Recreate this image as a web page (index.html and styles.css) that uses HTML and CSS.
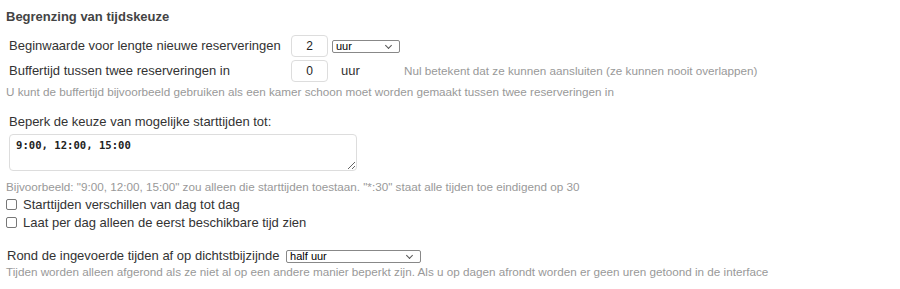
FILE: index.html
```html
<!DOCTYPE html>
<html lang="nl">
<head>
    <meta charset="UTF-8">
    <title>Begrenzing van tijdskeuze</title>
    <link rel="stylesheet" href="styles.css">
</head>
<body>
    <div class="settings">
        <h3>Begrenzing van tijdskeuze</h3>

        <table class="duration-table">
            <tr>
                <td class="label">Beginwaarde voor lengte nieuwe reserveringen</td>
                <td><input type="text" class="small-input" value="2"></td>
                <td class="unit-cell">
                    <span class="select-wrap unit-wrap">
                        <select class="plain-select">
                            <option>uur</option>
                        </select>
                    </span>
                </td>
                <td></td>
            </tr>
            <tr>
                <td class="label">Buffertijd tussen twee reserveringen in</td>
                <td><input type="text" class="small-input" value="0"></td>
                <td class="unit">uur</td>
                <td class="hint">Nul betekent dat ze kunnen aansluiten (ze kunnen nooit overlappen)</td>
            </tr>
        </table>
        <p class="help">U kunt de buffertijd bijvoorbeeld gebruiken als een kamer schoon moet worden gemaakt tussen twee reserveringen in</p>

        <div class="block">
            <label class="block-label" for="starttimes">Beperk de keuze van mogelijke starttijden tot:</label>
            <textarea id="starttimes" class="times">9:00, 12:00, 15:00</textarea>
            <p class="help">Bijvoorbeeld: "9:00, 12:00, 15:00" zou alleen die starttijden toestaan. "*:30" staat alle tijden toe eindigend op 30</p>
            <label class="check"><input type="checkbox"> Starttijden verschillen van dag tot dag</label>
            <label class="check"><input type="checkbox"> Laat per dag alleen de eerst beschikbare tijd zien</label>
        </div>

        <div class="block round">
            <label for="rounding">Rond de ingevoerde tijden af op dichtstbijzijnde</label>
            <span class="select-wrap round-wrap">
                <select id="rounding" class="plain-select">
                    <option>half uur</option>
                </select>
            </span>
            <p class="help">Tijden worden alleen afgerond als ze niet al op een andere manier beperkt zijn. Als u op dagen afrondt worden er geen uren getoond in de interface</p>
        </div>
    </div>
</body>
</html>
```

FILE: styles.css
```css
body {
    margin: 0;
    font-family: "Liberation Sans", Arial, sans-serif;
    font-size: 13px;
    color: #333;
    background-color: #fff;
}
.settings {
    padding: 0 6px;
}
.settings h3 {
    font-size: 13px;
    color: #444;
    margin: 0;
    padding-top: 9px;
    height: 21px;
}
.duration-table {
    border-collapse: collapse;
    margin-top: 3px;
}
.duration-table td {
    padding: 0;
    height: 25px;
    vertical-align: middle;
}
.duration-table .label {
    padding-left: 3px;
    width: 282px;
}
.small-input {
    width: 37px;
    height: 22px;
    box-sizing: border-box;
    border: 1px solid #ddd;
    border-radius: 4px;
    text-align: center;
    font-family: inherit;
    font-size: 12px;
    color: #222;
    padding: 0;
    margin: 0;
}
.unit-cell {
    width: 72px;
}
.unit-wrap {
    margin-left: 4px;
    width: 68px;
}
.unit {
    padding-left: 13px !important;
}
.hint {
    color: #999;
    font-size: 11.7px;
    padding-left: 4px !important;
}

/* select met dunne chevron */
.select-wrap {
    position: relative;
    display: inline-block;
    vertical-align: middle;
    height: 13px;
}
.select-wrap::after {
    content: "";
    position: absolute;
    right: 9px;
    top: 3px;
    width: 4px;
    height: 4px;
    border-right: 1px solid #555;
    border-bottom: 1px solid #555;
    transform: rotate(45deg);
    pointer-events: none;
}
.plain-select {
    -webkit-appearance: none;
    appearance: none;
    display: block;
    width: 100%;
    height: 13px;
    box-sizing: border-box;
    margin: 0;
    padding: 0 0 0 3px;
    font-size: 11px;
    line-height: 11px;
    font-family: inherit;
    border: 1px solid #888;
    border-radius: 2px;
    background: #fff;
    color: #000;
}

.help {
    margin: 0;
    color: #999;
    font-size: 11.7px;
    line-height: 17px;
}
.block {
    margin-top: 13px;
}
.block-label {
    display: block;
    padding-left: 3px;
    line-height: 18px;
}
.times {
    display: block;
    margin: 3px 0 7px 3px;
    width: 348px;
    height: 37px;
    box-sizing: border-box;
    border: 1px solid #ddd;
    border-radius: 4px;
    padding: 4px 6px;
    font-family: "DejaVu Sans Mono", "Liberation Mono", monospace;
    font-size: 10.6px;
    font-weight: bold;
    color: #222;
}
.check {
    display: flex;
    align-items: center;
    height: 18px;
}
.check input {
    -webkit-appearance: none;
    appearance: none;
    margin: 0 6px 0 0;
    width: 11px;
    height: 11px;
    box-sizing: border-box;
    border: 1px solid #777;
    border-radius: 2px;
    background: #fff;
}
.round {
    margin-top: 17px;
}
.round label {
    padding-left: 1px;
}
.round-wrap {
    margin-left: 3px;
    width: 135px;
}
```
